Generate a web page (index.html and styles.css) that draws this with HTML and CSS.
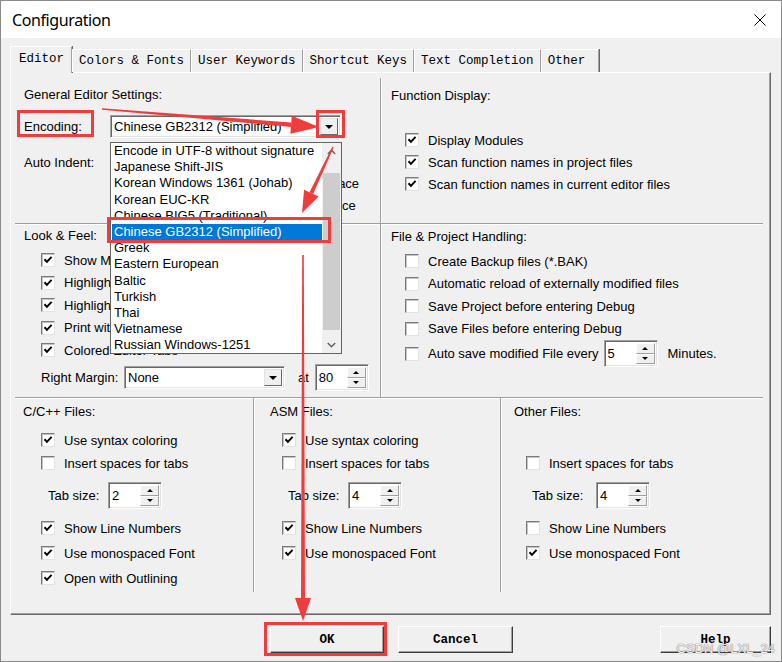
FILE: index.html
```html
<!DOCTYPE html>
<html lang="en">
<head>
  <meta charset="UTF-8" />
  <title>Configuration</title>
  <link rel="stylesheet" href="styles.css">
</head>
<body>
  <svg class="defs" width="0" height="0">
    <symbol id="tick" viewBox="0 0 10 10">
      <path d="M1.5 4.3 L3.9 6.9 L8.6 1.9" fill="none" stroke="#000" stroke-width="2"/>
    </symbol>
  </svg>

  <div class="window">
    <div class="titlebar">
      <span class="title">Configuration</span>
      <svg class="close" width="12" height="12" viewBox="0 0 12 12">
        <path d="M0.5 0.5 L11.5 11.5 M11.5 0.5 L0.5 11.5" stroke="#000" stroke-width="1"/>
      </svg>
    </div>

    <div class="dialog">
      <div class="tabs">
        <div class="tab active">Editor</div>
        <div class="tab">Colors &amp; Fonts</div>
        <div class="tab">User Keywords</div>
        <div class="tab">Shortcut Keys</div>
        <div class="tab">Text Completion</div>
        <div class="tab last">Other</div>
      </div>

      <div class="panel">
        <div class="top">
          <!-- general editor settings -->
          <div class="cell general">
            <div class="caption">General Editor Settings:</div>
            <div class="row enc">
              <span class="lbl">Encoding:</span>
              <div class="combo enc-combo">
                <span class="val">Chinese GB2312 (Simplified)</span>
                <span class="drop"></span>
                <div class="droplist">
                  <ul class="items">
                    <li>Encode in UTF-8 without signature</li>
                    <li>Japanese Shift-JIS</li>
                    <li>Korean Windows 1361 (Johab)</li>
                    <li>Korean EUC-KR</li>
                    <li>Chinese BIG5 (Traditional)</li>
                    <li class="sel">Chinese GB2312 (Simplified)</li>
                    <li>Greek</li>
                    <li>Eastern European</li>
                    <li>Baltic</li>
                    <li>Turkish</li>
                    <li>Thai</li>
                    <li>Vietnamese</li>
                    <li>Russian Windows-1251</li>
                  </ul>
                  <div class="sbar">
                    <span class="sbtn"><svg width="9" height="6" viewBox="0 0 9 6"><path d="M0.8 5 L4.5 1.2 L8.2 5" fill="none" stroke="#606060" stroke-width="1.4"/></svg></span>
                    <span class="thumb"></span>
                    <span class="sbtn sdn"><svg width="9" height="6" viewBox="0 0 9 6"><path d="M0.8 1 L4.5 4.8 L8.2 1" fill="none" stroke="#606060" stroke-width="1.4"/></svg></span>
                  </div>
                </div>
              </div>
            </div>
            <div class="row indent">
              <span class="lbl">Auto Indent:</span>
              <div class="combo indent-combo"><span class="val"></span><span class="drop"></span></div>
            </div>
            <label class="check"><span class="box"></span>Virtual Space</label>
            <label class="check"><span class="box"></span>White Space</label>
          </div>

          <!-- function display -->
          <div class="cell func">
            <div class="caption">Function Display:</div>
            <label class="check"><span class="box"><svg><use href="#tick"/></svg></span>Display Modules</label>
            <label class="check"><span class="box"><svg><use href="#tick"/></svg></span>Scan function names in project files</label>
            <label class="check"><span class="box"><svg><use href="#tick"/></svg></span>Scan function names in current editor files</label>
          </div>

          <!-- look & feel -->
          <div class="cell look">
            <div class="caption">Look &amp; Feel:</div>
            <label class="check"><span class="box"><svg><use href="#tick"/></svg></span>Show Message Dialogs</label>
            <label class="check"><span class="box"><svg><use href="#tick"/></svg></span>Highlight Current Line</label>
            <label class="check"><span class="box"><svg><use href="#tick"/></svg></span>Highlight matching braces</label>
            <label class="check"><span class="box"><svg><use href="#tick"/></svg></span>Print with syntax coloring</label>
            <label class="check"><span class="box"><svg><use href="#tick"/></svg></span>Colored Editor Tabs</label>
            <div class="row margin-row">
              <span class="lbl">Right Margin:</span>
              <div class="combo margin-combo"><span class="val">None</span><span class="drop"></span></div>
              <span class="at">at</span>
              <div class="spin"><span class="val">80</span><span class="arrows"><i class="up"></i><i class="dn"></i></span></div>
            </div>
          </div>

          <!-- file & project handling -->
          <div class="cell files">
            <div class="caption">File &amp; Project Handling:</div>
            <label class="check"><span class="box"></span>Create Backup files (*.BAK)</label>
            <label class="check"><span class="box"></span>Automatic reload of externally modified files</label>
            <label class="check"><span class="box"></span>Save Project before entering Debug</label>
            <label class="check"><span class="box"></span>Save Files before entering Debug</label>
            <label class="check autosave"><span class="box"></span>Auto save modified File every
              <div class="spin"><span class="val">5</span><span class="arrows"><i class="up"></i><i class="dn"></i></span></div>
              <span class="minutes">Minutes.</span>
            </label>
          </div>
        </div>

        <div class="langs">
          <div class="lang cpp">
            <div class="caption">C/C++ Files:</div>
            <label class="check"><span class="box"><svg><use href="#tick"/></svg></span>Use syntax coloring</label>
            <label class="check ins"><span class="box"></span>Insert spaces for tabs</label>
            <div class="tabsize"><span class="lbl">Tab size:</span>
              <div class="spin"><span class="val">2</span><span class="arrows"><i class="up"></i><i class="dn"></i></span></div>
            </div>
            <label class="check"><span class="box"><svg><use href="#tick"/></svg></span>Show Line Numbers</label>
            <label class="check"><span class="box"><svg><use href="#tick"/></svg></span>Use monospaced Font</label>
            <label class="check"><span class="box"><svg><use href="#tick"/></svg></span>Open with Outlining</label>
          </div>
          <div class="lang asm">
            <div class="caption">ASM Files:</div>
            <label class="check"><span class="box"><svg><use href="#tick"/></svg></span>Use syntax coloring</label>
            <label class="check ins"><span class="box"></span>Insert spaces for tabs</label>
            <div class="tabsize"><span class="lbl">Tab size:</span>
              <div class="spin"><span class="val">4</span><span class="arrows"><i class="up"></i><i class="dn"></i></span></div>
            </div>
            <label class="check"><span class="box"><svg><use href="#tick"/></svg></span>Show Line Numbers</label>
            <label class="check"><span class="box"><svg><use href="#tick"/></svg></span>Use monospaced Font</label>
          </div>
          <div class="lang oth">
            <div class="caption">Other Files:</div>
            <label class="check ins"><span class="box"></span>Insert spaces for tabs</label>
            <div class="tabsize"><span class="lbl">Tab size:</span>
              <div class="spin"><span class="val">4</span><span class="arrows"><i class="up"></i><i class="dn"></i></span></div>
            </div>
            <label class="check"><span class="box"></span>Show Line Numbers</label>
            <label class="check"><span class="box"><svg><use href="#tick"/></svg></span>Use monospaced Font</label>
          </div>
        </div>
      </div>

      <div class="buttons">
        <div class="btn ok">OK</div>
        <div class="btn cancel">Cancel</div>
        <div class="btn help">Help</div>
      </div>
    </div>

    <!-- red annotation marks drawn over the dialog -->
    <svg class="marks" width="782" height="662" viewBox="0 0 782 662">
      <g fill="#f03c3c">
        <polygon points="102,108.3 291.3,122.5 290.9,126.9 102,109.8"/>
        <polygon points="319,127 291.8,115.7 290.4,133.7"/>
        <polygon points="333.7,147.3 332.3,146.7 309.5,192.3 313.2,194"/>
        <polygon points="302,213 304.1,189.7 318.6,196.5"/>
        <polygon points="302.2,255 303.8,255 305,600 301,600"/>
        <polygon points="303,621 295,598 311,598"/>
      </g>
      <g fill="none" stroke="#f03c3c" stroke-width="3">
        <rect x="18.5" y="111.5" width="74" height="24"/>
        <rect x="317.5" y="111.5" width="26" height="25"/>
        <rect x="108.5" y="218.5" width="221" height="23"/>
        <rect x="265.5" y="623.5" width="120" height="31"/>
      </g>
    </svg>

    <div class="watermark">CSDN @LXL_24</div>
  </div>
</body>
</html>
```

FILE: styles.css
```css
* {
  box-sizing: border-box;
}
body {
  margin: 0;
  background: #f0f0f0;
  font-family: "Liberation Sans", Arial, sans-serif;
  font-size: 13px;
  color: #000;
}
.defs {
  position: absolute;
}
.window {
  position: relative;
  width: 782px;
  height: 662px;
  border: 1px solid #8a8a8a;
  background: #f0f0f0;
  overflow: hidden;
}
.titlebar {
  height: 37px;
  background: #fff;
  display: flex;
  align-items: center;
  padding: 1px 15px 0 11px;
}
.title {
  font-family: "Noto Sans", sans-serif;
  font-size: 16px;
  letter-spacing: -0.4px;
}
.close {
  margin-left: auto;
}
.dialog {
  padding: 8px 10px 0 9px;
}

/* tabs */
.tabs {
  display: flex;
  align-items: flex-end;
  height: 26px;
  position: relative;
  z-index: 2;
}
.tab {
  height: 23px;
  line-height: 22px;
  padding: 0 6px;
  font-family: "Liberation Mono", monospace;
  font-size: 12.5px;
  white-space: nowrap;
  border-top: 1px solid #fff;
  border-left: 1px solid #fff;
  border-right: 1px solid #a0a0a0;
  box-shadow: 1px 0 0 #696969;
}
.tab.active {
  height: 27px;
  width: 62px;
  margin-bottom: -1px;
  padding: 0 8px;
  line-height: 24px;
  background: #f0f0f0;
}
.tab.last {
  padding-right: 13px;
}
.panel {
  height: 543px;
  border: 1px solid;
  border-color: #fff #696969 #696969 #fff;
  box-shadow: inset -1px -1px #a0a0a0;
  padding: 5px 7px 0 4px;
}

/* group layout */
.top {
  display: grid;
  grid-template-columns: 365px 1fr;
  grid-template-rows: 145px 174px;
}
.langs {
  display: grid;
  grid-template-columns: 238px 247px 1fr;
  height: 195px;
}
.caption {
  height: 16px;
  line-height: 16px;
  white-space: nowrap;
}
.general {
  padding: 9px 0 0 9px;
}
.func {
  border-left: 1px solid #a0a0a0;
  box-shadow: inset 1px 0 #fff;
  padding: 10px 0 0 10px;
}
.look {
  border-top: 1px solid #a0a0a0;
  box-shadow: inset 0 1px #fff;
  padding: 4px 0 0 9px;
}
.files {
  border-top: 1px solid #a0a0a0;
  border-left: 1px solid #a0a0a0;
  box-shadow: inset 1px 1px #fff;
  padding: 5px 0 0 10px;
}
.lang {
  border-top: 1px solid #a0a0a0;
  box-shadow: inset 0 1px #fff;
}
.lang + .lang {
  border-left: 1px solid #a0a0a0;
  box-shadow: inset 1px 1px #fff;
}
.cpp {
  padding: 6px 0 0 8px;
}
.asm {
  padding: 6px 0 0 16px;
}
.oth {
  padding: 6px 0 0 13px;
}

/* checkboxes */
.check {
  display: flex;
  align-items: center;
  height: 16px;
  gap: 9px;
  white-space: nowrap;
}
.box {
  flex: none;
  width: 14px;
  height: 14px;
  background: #fff;
  border: 1px solid;
  border-color: #7a7a7a #e3e3e3 #e3e3e3 #7a7a7a;
  box-shadow: inset 1px 1px #c4c4c4;
  display: flex;
  align-items: center;
  justify-content: center;
}
.box svg {
  width: 10px;
  height: 10px;
}
.general .check {
  margin: 6px 0 0 235px;
}
.general .indent + .check {
  margin-top: 1px;
}
.func .check {
  margin: 6px 0 0 14px;
}
.func .caption + .check {
  margin-top: 28px;
}
.look .check {
  margin: 6.5px 0 0 17px;
}
.look .caption + .check {
  margin-top: 8px;
}
.files .check {
  margin: 6.5px 0 0 14px;
}
.files .caption + .check {
  margin-top: 8px;
}
.files .autosave {
  height: 27px;
  margin-top: 3.5px;
  gap: 0;
}
.autosave .box {
  margin-right: 9px;
}
.autosave .spin {
  margin-left: 5px;
}
.minutes {
  margin-left: 10px;
}
.lang .check {
  margin-top: 9px;
}
.lang .caption + .check {
  margin-top: 12px;
}
.lang .ins {
  margin-top: 7px;
}
.lang.oth .ins {
  margin-top: 35px;
}
.cpp .check {
  margin-left: 18px;
}
.asm .check,
.oth .check {
  margin-left: 12px;
}
.tabsize {
  display: flex;
  align-items: center;
  height: 27px;
  margin-top: 11px;
}
.tabsize + .check {
  margin-top: 11px;
}
.tabsize .lbl {
  width: 60px;
}
.cpp .tabsize {
  margin-left: 25px;
}
.asm .tabsize,
.oth .tabsize {
  margin-left: 18px;
}
.oth .tabsize .lbl {
  width: 64px;
}

/* rows with combos */
.row {
  display: flex;
  align-items: center;
  height: 23px;
  white-space: nowrap;
}
.row .lbl {
  width: 86px;
}
.enc {
  margin-top: 12px;
}
.indent {
  margin-top: 13px;
}
.margin-row {
  margin: 8px 0 0 17px;
}
.margin-row .lbl {
  width: 83px;
}
.at {
  margin: 0 6px 0 13px;
}
.combo {
  display: flex;
  height: 23px;
  padding: 2px;
  background: #fff;
  border: 1px solid;
  border-color: #a0a0a0 #fff #fff #a0a0a0;
  box-shadow: inset 1px 1px #696969, inset -1px -1px #e3e3e3;
}
.combo .val {
  flex: 1;
  padding-left: 1px;
  line-height: 17px;
  overflow: hidden;
}
.drop {
  width: 18px;
  background: #f0f0f0;
  border: 1px solid;
  border-color: #e3e3e3 #696969 #696969 #e3e3e3;
  display: flex;
  align-items: center;
  justify-content: center;
}
.drop::after {
  content: "";
  border-left: 4px solid transparent;
  border-right: 4px solid transparent;
  border-top: 4px solid #000;
}
.enc-combo {
  width: 231px;
  position: relative;
}
.indent-combo {
  width: 110px;
}
.margin-combo {
  width: 161px;
}

/* spin boxes */
.spin {
  flex: none;
  display: flex;
  width: 54px;
  height: 27px;
  padding: 2px;
  background: #fff;
  border: 1px solid;
  border-color: #a0a0a0 #fff #fff #a0a0a0;
  box-shadow: inset 1px 1px #696969, inset -1px -1px #e3e3e3;
}
.spin .val {
  flex: 1;
  padding-left: 1px;
  line-height: 21px;
}
.arrows {
  width: 19px;
  display: flex;
  flex-direction: column;
}
.arrows i {
  flex: 1;
  background: #f0f0f0;
  border: 1px solid;
  border-color: #fff #a0a0a0 #a0a0a0 #fff;
  display: flex;
  align-items: center;
  justify-content: center;
}
.arrows .up::after {
  content: "";
  border-left: 3px solid transparent;
  border-right: 3px solid transparent;
  border-bottom: 3px solid #000;
}
.arrows .dn::after {
  content: "";
  border-left: 3px solid transparent;
  border-right: 3px solid transparent;
  border-top: 3px solid #000;
}

/* open encoding list */
.droplist {
  position: absolute;
  left: -1px;
  top: 26px;
  width: 232px;
  height: 212px;
  display: flex;
  background: #fff;
  border: 1px solid #646464;
  z-index: 5;
}
.items {
  flex: 1;
  list-style: none;
  margin: 0;
  padding: 0 0 0 1px;
}
.items li {
  height: 16.2px;
  line-height: 16.2px;
  padding-left: 2px;
  white-space: nowrap;
}
.items li.sel {
  background: #0078d7;
  color: #fff;
}
.sbar {
  width: 19px;
  background: #f0f0f0;
  display: flex;
  flex-direction: column;
  align-items: center;
}
.sbtn {
  height: 17px;
  display: flex;
  align-items: center;
  justify-content: center;
}
.thumb {
  width: 17px;
  height: 157px;
  margin-top: 13px;
  background: #cdcdcd;
}
.sdn {
  margin-top: auto;
}

/* bottom buttons */
.buttons {
  display: flex;
  height: 27px;
  margin-top: 11px;
}
.btn {
  height: 27px;
  display: flex;
  align-items: center;
  justify-content: center;
  font-family: "Liberation Mono", monospace;
  font-size: 12.5px;
  font-weight: bold;
  background: #f0f0f0;
  border: 1px solid;
  border-color: #fff #3c3c3c #3c3c3c #fff;
  box-shadow: inset -1px -1px #a0a0a0;
}
.ok {
  width: 114px;
  margin-left: 260px;
}
.cancel {
  width: 115px;
  margin-left: 14px;
}
.help {
  width: 111px;
  margin-left: auto;
}

.marks {
  position: absolute;
  left: -1px;
  top: -1px;
  z-index: 10;
  pointer-events: none;
}
.watermark {
  position: absolute;
  right: 6px;
  bottom: 5px;
  z-index: 11;
  color: rgba(255, 255, 255, 0.9);
  text-shadow: 0 0 1px #777, 0 0 1px #777;
}
```
